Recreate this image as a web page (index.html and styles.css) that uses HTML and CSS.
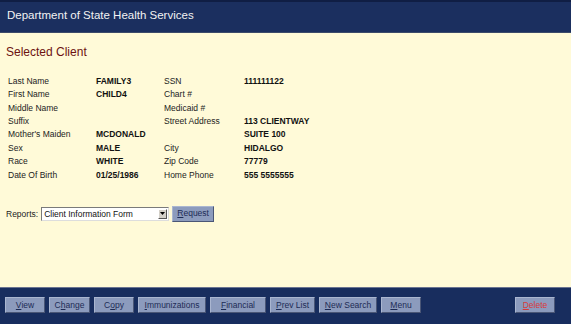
FILE: index.html
```html
<!DOCTYPE html>
<html>
<head>
<meta charset="utf-8">
<link rel="stylesheet" href="styles.css">
</head>
<body>
<div class="page">
  <header class="topbar">Department of State Health Services</header>
  <main class="content">
    <h1 class="title">Selected Client</h1>
    <div class="grid">
      <span class="lbl">Last Name</span><span class="val">FAMILY3</span><span class="lbl">SSN</span><span class="val">111111122</span>
      <span class="lbl">First Name</span><span class="val">CHILD4</span><span class="lbl">Chart #</span><span class="val"></span>
      <span class="lbl">Middle Name</span><span class="val"></span><span class="lbl">Medicaid #</span><span class="val"></span>
      <span class="lbl">Suffix</span><span class="val"></span><span class="lbl">Street Address</span><span class="val">113 CLIENTWAY</span>
      <span class="lbl">Mother's Maiden</span><span class="val">MCDONALD</span><span class="lbl"></span><span class="val">SUITE 100</span>
      <span class="lbl">Sex</span><span class="val">MALE</span><span class="lbl">City</span><span class="val">HIDALGO</span>
      <span class="lbl">Race</span><span class="val">WHITE</span><span class="lbl">Zip Code</span><span class="val">77779</span>
      <span class="lbl">Date Of Birth</span><span class="val">01/25/1986</span><span class="lbl">Home Phone</span><span class="val">555 5555555</span>
    </div>
    <div class="reports">
      <span class="lbl">Reports:</span>
      <div class="select"><span class="select-text">Client Information Form</span><span class="select-arrow"><svg width="5" height="3" viewBox="0 0 5 3"><path d="M0 0h5L2.5 3z" fill="#000"/></svg></span></div>
      <button class="btn btn-request"><u>R</u>equest</button>
    </div>
  </main>
  <footer class="bottombar">
    <button class="btn w-view"><u>V</u>iew</button>
    <button class="btn w-change">C<u>h</u>ange</button>
    <button class="btn w-copy">C<u>o</u>py</button>
    <button class="btn w-imm"><u>I</u>mmunizations</button>
    <button class="btn w-fin"><u>F</u>inancial</button>
    <button class="btn w-prev"><u>P</u>rev List</button>
    <button class="btn w-new"><u>N</u>ew Search</button>
    <button class="btn w-menu"><u>M</u>enu</button>
    <span class="spacer"></span>
    <button class="btn w-del btn-delete"><u>D</u>elete</button>
  </footer>
</div>
</body>
</html>
```
FILE: styles.css
```css
* { box-sizing: border-box; }
html, body { margin: 0; padding: 0; }
body {
  width: 571px;
  height: 324px;
  overflow: hidden;
  font-family: "Liberation Sans", Arial, sans-serif;
  background: #fffad8;
}
.page {
  display: flex;
  flex-direction: column;
  height: 324px;
}
.topbar {
  height: 33px;
  background: #1b2f5f;
  border-top: 2px solid #101e44;
  border-bottom: 1px solid #3c4a6a;
  color: #f2f2f2;
  font-size: 11.5px;
  padding: 7px 0 0 7px;
}
.content {
  flex: 1;
  background: #fffad8;
  padding: 12px 0 0 6px;
}
.title {
  margin: 0;
  font-size: 12px;
  font-weight: normal;
  color: #6d1212;
  line-height: 15px;
}
.grid {
  display: grid;
  grid-template-columns: 88px 68px 80px auto;
  grid-auto-rows: 13.45px;
  margin-top: 14px;
  padding-left: 2px;
  align-items: center;
}
.lbl {
  font-size: 8.5px;
  color: #222;
}
.val {
  font-size: 8.5px;
  font-weight: bold;
  color: #111;
}
.reports {
  display: flex;
  align-items: center;
  margin-top: 24px;
}
.reports .lbl { margin-right: 3px; }
.select {
  width: 128px;
  height: 14px;
  background: #fff;
  border: 1px solid #7a7a7a;
  border-right-color: #ddd;
  border-bottom-color: #ddd;
  display: flex;
  align-items: center;
  font-size: 8.5px;
  color: #111;
  padding-left: 2px;
}
.select-text { flex: 1; }
.select-arrow {
  width: 9px;
  height: 10px;
  background: #d4d0c8;
  border: 1px solid #fff;
  border-right-color: #555;
  border-bottom-color: #555;
  display: flex;
  align-items: center;
  justify-content: center;
  margin-right: 1px;
}
.btn {
  height: 16px;
  padding: 0;
  font-family: "Liberation Sans", Arial, sans-serif;
  font-size: 8.5px;
  color: #1d2b55;
  background: #8c9bbd;
  border: 1px solid;
  border-color: #aab6d0 #4a5676 #4a5676 #aab6d0;
  text-align: center;
  line-height: 13px;
}
.btn-request {
  width: 42px;
  margin-left: 3px;
}
.bottombar {
  height: 37px;
  background: #182d5e;
  border-top: 1px solid #6a7390;
  display: flex;
  align-items: flex-start;
  padding: 9px 0 0 5px;
  gap: 4px;
}
.spacer { flex: 1; }
.w-view { width: 40px; }
.w-change { width: 41px; }
.w-copy { width: 40px; }
.w-imm { width: 68px; }
.w-fin { width: 56px; }
.w-prev { width: 45px; }
.w-new { width: 58px; }
.w-menu { width: 40px; }
.w-del { width: 40px; margin-right: 16px; }
.btn-delete { color: #d83a3a; }
```
